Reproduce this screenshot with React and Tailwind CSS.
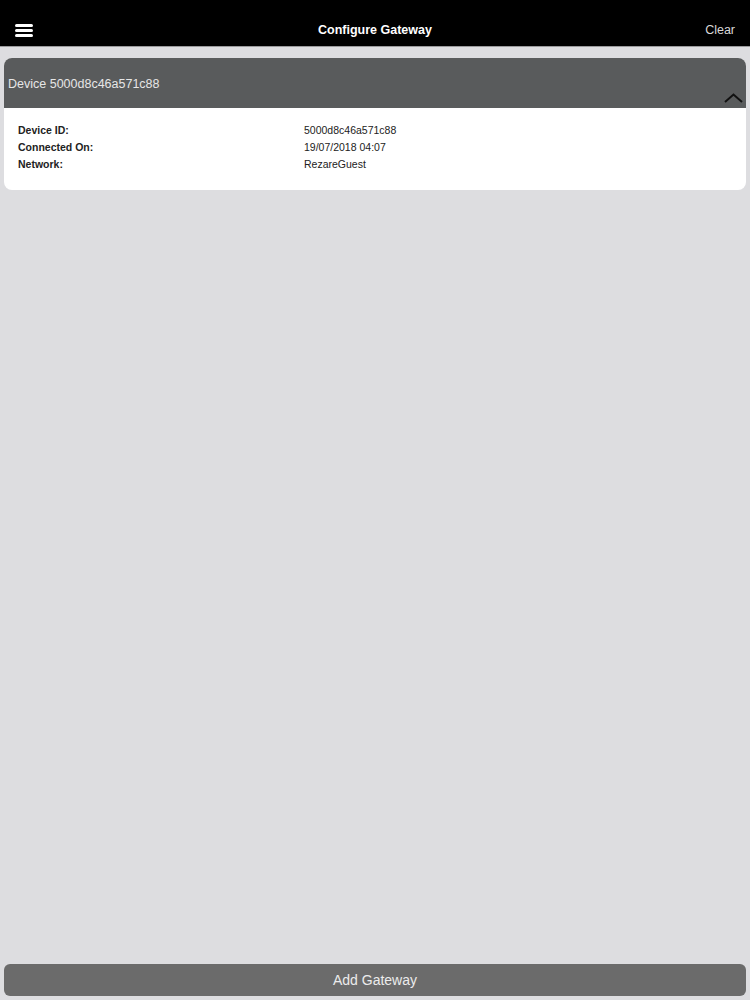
import { useState } from 'react'

const details = [
  { label: 'Device ID:', value: '5000d8c46a571c88' },
  { label: 'Connected On:', value: '19/07/2018 04:07' },
  { label: 'Network:', value: 'RezareGuest' },
]

const App = () => {
  const [open, setOpen] = useState(true)

  return (
    <div className="flex h-[1000px] w-[750px] flex-col bg-[#dddde0] font-['Liberation_Sans',Arial,sans-serif]">
      <header className="grid h-[47px] shrink-0 grid-cols-[1fr_auto_1fr] items-center border-b border-[#9a9a9c] bg-black px-[15px] pt-[15px]">
        <button className="flex w-[18px] flex-col gap-[2px]">
          <span className="h-[3px] w-[18px] rounded-sm bg-white" />
          <span className="h-[3px] w-[18px] rounded-sm bg-white" />
          <span className="h-[3px] w-[18px] rounded-sm bg-white" />
        </button>
        <h1 className="text-[12.5px] font-semibold text-white">Configure Gateway</h1>
        <button className="justify-self-end text-[12.5px] text-[#d8d8d8]">Clear</button>
      </header>

      <main className="flex flex-1 flex-col px-[4px] pt-[11px]">
        <div className="overflow-hidden rounded-[8px] bg-white">
          <button
            onClick={() => setOpen(!open)}
            className="relative flex h-[50px] w-full items-center bg-[#595b5c] pl-[4px] pt-[2px] text-left"
          >
            <span className="text-[12.5px] text-[#e6e6e6]">Device 5000d8c46a571c88</span>
            <svg
              className="absolute bottom-[5px] right-[3px]"
              width="19"
              height="10"
              viewBox="0 0 19 10"
              fill="none"
              stroke="#111"
              strokeWidth="2"
            >
              <path d={open ? 'M1 9 L9.5 1.5 L18 9' : 'M1 1 L9.5 8.5 L18 1'} />
            </svg>
          </button>
          {open && (
            <div className="grid grid-cols-[286px_1fr] gap-y-[3px] pb-[19px] pl-[14px] pt-[15px] text-[10.5px] leading-[14px] text-[#222]">
              {details.map((item) => (
                <div key={item.label} className="contents">
                  <span className="font-bold">{item.label}</span>
                  <span>{item.value}</span>
                </div>
              ))}
            </div>
          )}
        </div>

        <div className="flex-1" />

        <button className="mb-[4px] h-[32px] w-full rounded-[6px] bg-[#6b6b6b] text-[14px] text-[#ececec]">
          Add Gateway
        </button>
      </main>
    </div>
  )
}

export default App
